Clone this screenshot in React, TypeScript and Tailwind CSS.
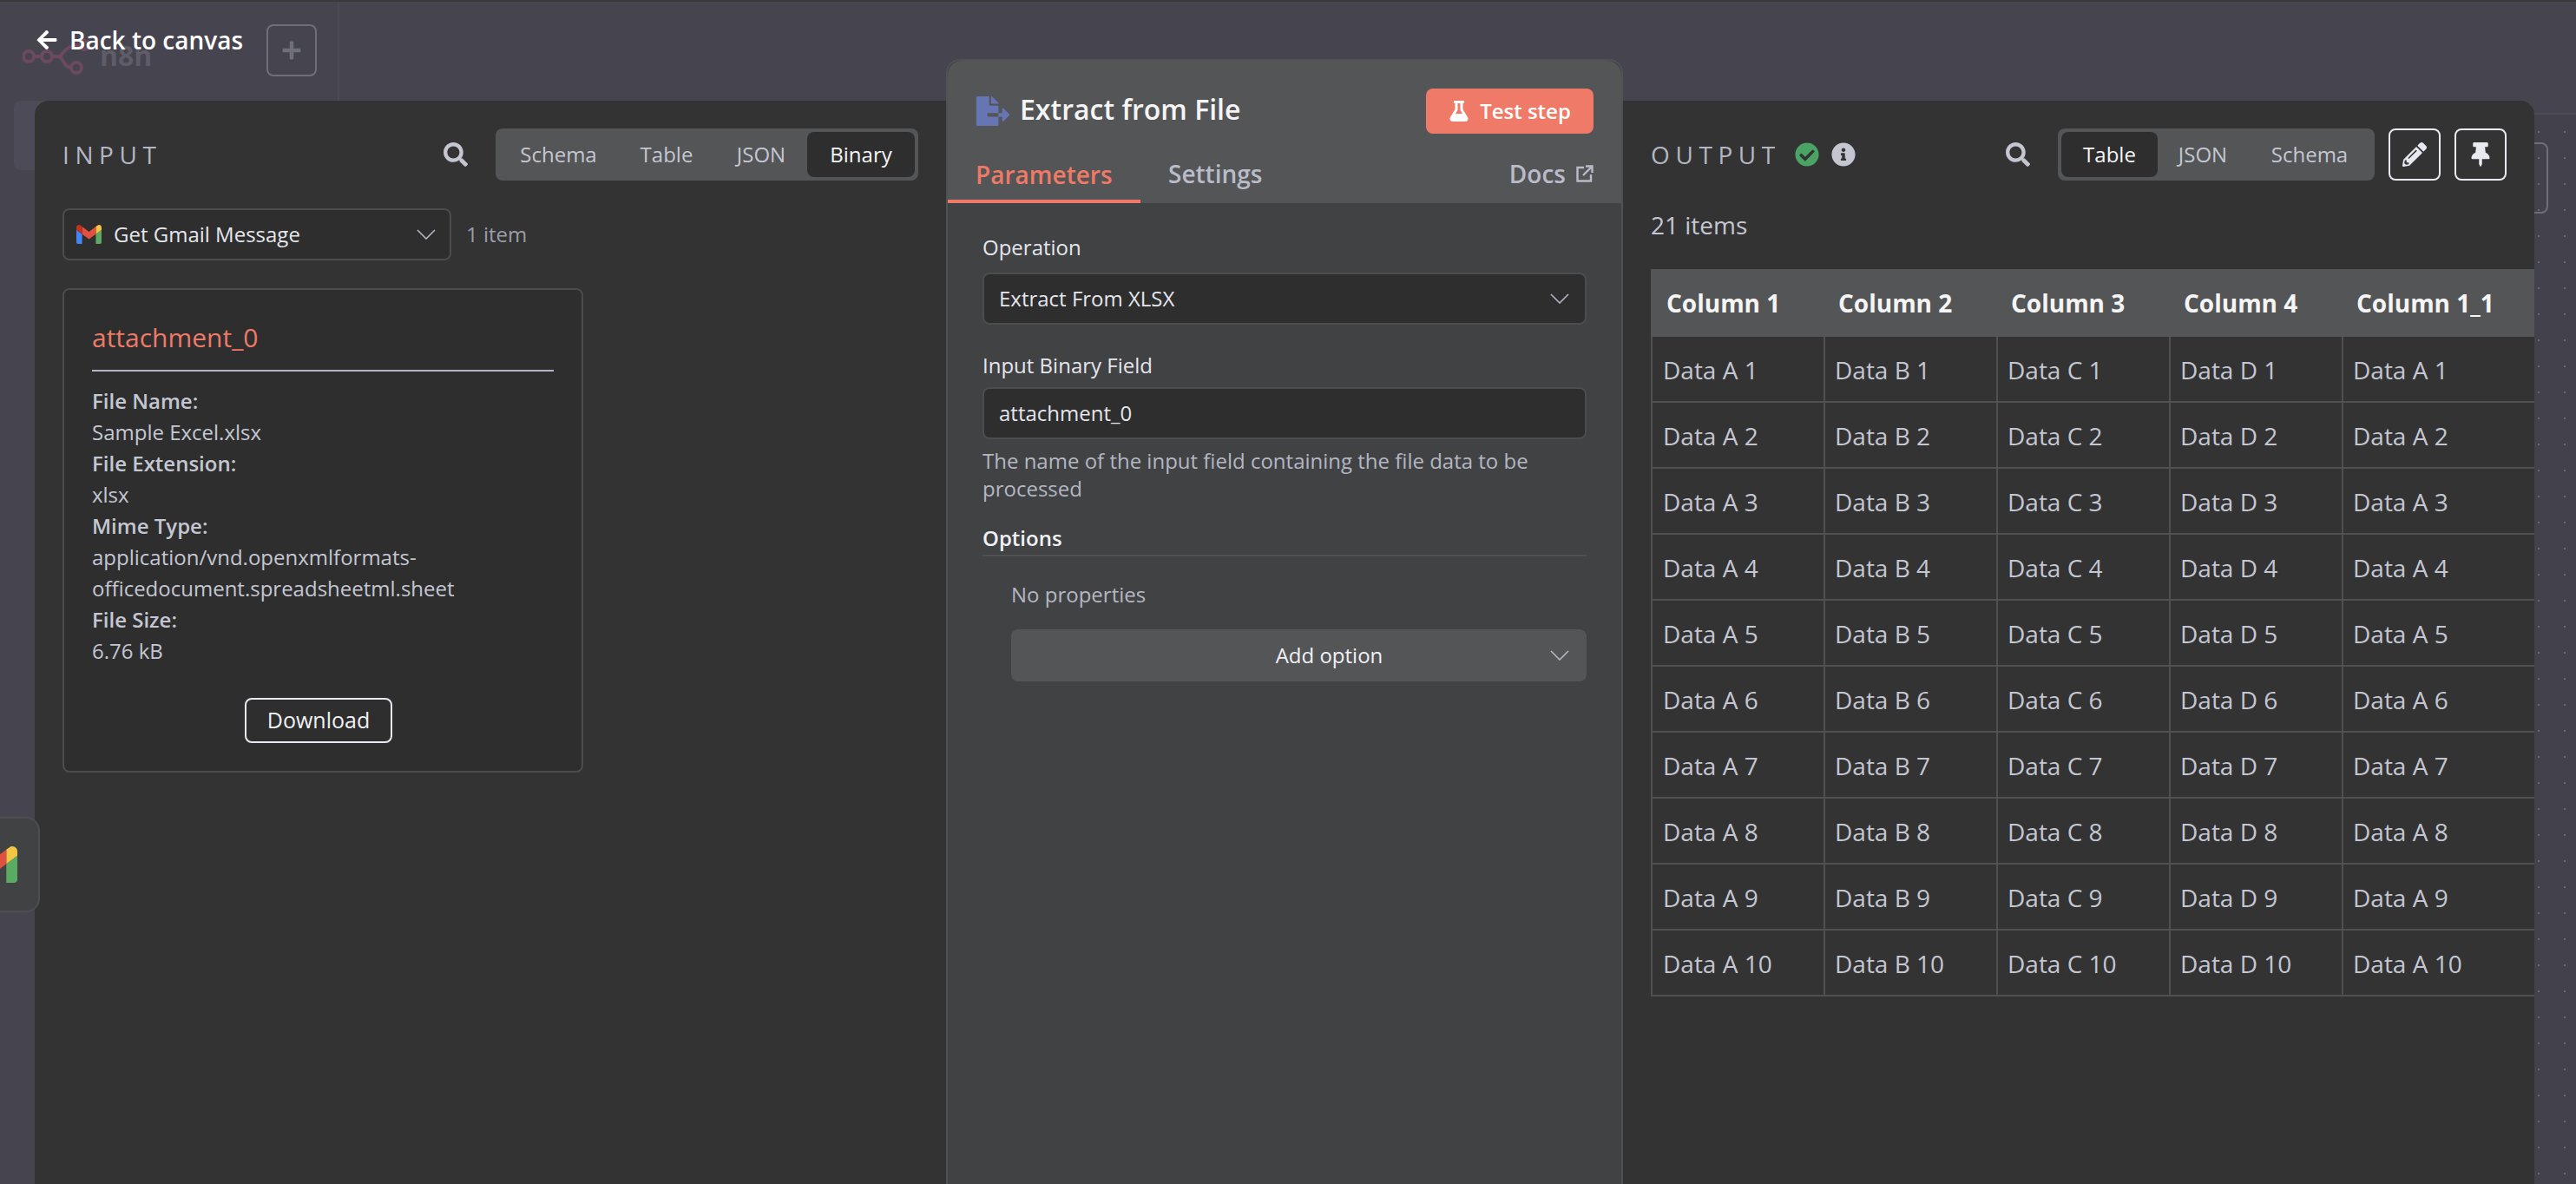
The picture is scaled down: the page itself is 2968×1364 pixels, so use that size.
import React from "react";
import { FaArrowLeft, FaPlus, FaSearch, FaFileExport, FaFlask, FaCheckCircle, FaInfoCircle, FaPencilAlt, FaThumbtack } from "react-icons/fa";

function Chevron() {
  return (
    <svg width="22" height="12" viewBox="0 0 22 12" fill="none" className="shrink-0">
      <path d="M1 1l10 10L21 1" stroke="#b4b7c2" strokeWidth="1.6" />
    </svg>
  );
}

function Gmail({ className }: { className: string }) {
  return (
    <svg viewBox="52 42 88 66" className={className}>
      <path fill="#4285f4" d="M58 108h14V74L52 59v43c0 3.32 2.69 6 6 6" />
      <path fill="#5aaa63" d="M120 108h14c3.32 0 6-2.69 6-6V59l-20 15" />
      <path fill="#f3c544" d="M120 48v26l20-15v-8c0-7.42-8.47-11.65-14.4-7.2" />
      <path fill="#e0513f" d="M72 74V48l24 18 24-18v26L96 92" />
      <path fill="#c5321f" d="M52 51v8l20 15V48l-5.6-4.2c-5.94-4.45-14.4-.22-14.4 7.2" />
    </svg>
  );
}

function Tabs({ items, active }: { items: { label: string; w: string }[]; active: string }) {
  return (
    <div className="flex h-[60px] items-center rounded-lg bg-[#545556] px-[4px]">
      {items.map((t) =>
        t.label === active ? (
          <div key={t.label} className={`flex h-[52px] items-center justify-center rounded-lg bg-[#2e2e2e] text-[#f5f5f5] ${t.w}`}>
            {t.label}
          </div>
        ) : (
          <div key={t.label} className={`flex h-[52px] items-center justify-center text-[#c4c7d2] ${t.w}`}>
            {t.label}
          </div>
        )
      )}
    </div>
  );
}

const columns = ["Column 1", "Column 2", "Column 3", "Column 4", "Column 1_1"];
const rows = Array.from({ length: 10 }, (_, i) => i + 1);

function CardRow({ label, value }: { label: string; value: string[] }) {
  return (
    <>
      <div className="h-[36px] font-semibold leading-[36px]">{label}</div>
      {value.map((v) => (
        <div key={v} className="h-[36px] leading-[36px]">{v}</div>
      ))}
    </>
  );
}

export default function App() {
  return (
    <div className="relative h-[1364px] w-[2968px] overflow-hidden border-t-2 border-[#3a3a3a] bg-[#45444f] [font-family:'Open_Sans',sans-serif]">
      {/* canvas behind the modal */}
      <div className="flex h-[130px]">
        <div className="w-[391px] border-r-2 border-[#4a4955] pl-[26px] pt-[41px]">
          <div className="flex items-center">
            <svg width="76" height="44" viewBox="0 0 76 44" fill="none" stroke="#6b4a5d" strokeWidth="4">
              <circle cx="7" cy="22" r="6" />
              <circle cx="28" cy="22" r="6" />
              <circle cx="62" cy="35" r="6" />
              <circle cx="71" cy="9" r="5" />
              <path d="M13 22h9M34 22h7c6 0 6-13 25-13M41 22c6 0 6 13 15 13" />
            </svg>
            <span className="mb-[2px] ml-[13px] text-[32px] font-bold leading-[34px] text-[#5d5c67]">n8n</span>
          </div>
          <div className="-ml-[10px] mt-[29px] h-[80px] w-[348px] rounded-lg bg-[#4c4b57]" />
        </div>
        <div className="flex-1 border-b-2 border-[#4c4b57]" />
      </div>
      <div className="absolute bottom-0 left-[2920px] right-0 top-[130px] bg-[#42414c] bg-[radial-gradient(circle_at_5px_20px,#6b6a76_1px,transparent_1.5px)] bg-[length:30px_30px]" />
      <div className="absolute right-[32px] top-[162px] h-[82px] w-[40px] rounded-lg border-2 border-[#6f6f7c]" />

      {/* back link and add button on the modal backdrop */}
      <div className="absolute left-[41px] top-[24px] flex items-center gap-[13px] text-[28px] font-semibold leading-[40px] text-white">
        <FaArrowLeft className="h-[26px] w-[26px]" />
        <span>Back to canvas</span>
      </div>
      <div className="absolute left-[307px] top-[26px] flex h-[60px] w-[58px] items-center justify-center rounded-lg border-2 border-[#6f6f7c]">
        <FaPlus className="h-[24px] w-[24px] text-[#6f6f7c]" />
      </div>

      {/* modal */}
      <div className="absolute bottom-0 left-[40px] right-[48px] top-[114px] flex rounded-t-2xl bg-[#333333]">
        {/* input */}
        <div className="w-[1050px] shrink-0 pl-[32px] pr-[32px] pt-[32px]">
          <div className="flex h-[60px] items-center">
            <div className="text-[28px] uppercase leading-none tracking-[6.6px] text-[#b4b7c2]">Input</div>
            <FaSearch className="ml-auto h-[28px] w-[28px] text-[#c4c7d2]" />
            <div className="ml-[32px] text-[24px] font-medium">
              <Tabs
                active="Binary"
                items={[
                  { label: "Schema", w: "w-[137px]" },
                  { label: "Table", w: "w-[112px]" },
                  { label: "JSON", w: "w-[106px]" },
                  { label: "Binary", w: "w-[124px]" },
                ]}
              />
            </div>
          </div>
          <div className="mt-[32px] flex items-center">
            <div className="flex h-[60px] w-[448px] items-center rounded-lg border-2 border-[#4c4c4c] bg-[#2e2e2e] pl-[14px] pr-[16px]">
              <Gmail className="h-[22px] w-[29px]" />
              <span className="ml-[14px] text-[24px] text-[#e4e6ec]">Get Gmail Message</span>
              <span className="ml-auto"><Chevron /></span>
            </div>
            <span className="ml-[17px] text-[24px] text-[#9a9da8]">1 item</span>
          </div>
          <div className="mt-[32px] h-[558px] w-[600px] rounded-lg border-2 border-[#4c4c4c] bg-[#2e2e2e] px-[32px] pt-[32px] text-[24px] text-[#c4c7d2]">
            <div className="h-[46px] text-[30px] font-medium leading-[46px] text-[#ef7a67]">attachment_0</div>
            <div className="mb-[16px] mt-[14px] border-b-2 border-[#b4b7c2]" />
            <CardRow label="File Name:" value={["Sample Excel.xlsx"]} />
            <CardRow label="File Extension:" value={["xlsx"]} />
            <CardRow label="Mime Type:" value={["application/vnd.openxmlformats-", "officedocument.spreadsheetml.sheet"]} />
            <CardRow label="File Size:" value={["6.76 kB"]} />
            <div className="mt-[36px] flex justify-center pr-[10px]">
              <div className="flex h-[52px] w-[170px] items-center justify-center rounded-lg border-2 border-[#e8eaf0] text-[25px] font-medium text-[#f0f1f5]">
                Download
              </div>
            </div>
          </div>
        </div>

        {/* parameters */}
        <div className="z-10 -mt-[48px] w-[780px] shrink-0 rounded-t-2xl border-x-2 border-t-2 border-[#505152] bg-[#414244]">
          <div className="rounded-t-2xl bg-[#545556]">
            <div className="flex h-[84px] items-center pl-[32px] pr-[32px] pt-[32px]">
              <FaFileExport className="h-[34px] w-[40px] text-[#6675b3]" />
              <div className="mb-[4px] ml-[11px] text-[32px] font-semibold leading-none text-[#f5f5f5]">Extract from File</div>
              <div className="ml-auto flex h-[52px] w-[193px] items-center justify-center gap-[12px] rounded-lg bg-[#ef7a67] text-[24px] font-semibold text-white">
                <FaFlask className="h-[24px] w-[24px]" />
                <span>Test step</span>
              </div>
            </div>
            <div className="flex h-[80px] items-end pr-[32px] text-[28px] font-semibold text-[#b9bcc8]">
              <div className="flex h-[80px] w-[222px] items-center border-b-4 border-[#ef7a67] pl-[32px] pt-[18px] text-[#ef7a67]">Parameters</div>
              <div className="flex h-[80px] items-center pl-[32px] pt-[12px]">Settings</div>
              <div className="ml-auto flex h-[80px] items-center gap-[12px] pt-[12px]">
                <span>Docs</span>
                <svg width="20" height="20" viewBox="0 0 20 20" fill="none" stroke="#b9bcc8" strokeWidth="2.4">
                  <path d="M9 3H1.5v15.5H17V11M8 12L18 2M11 1.5h7.5V9" />
                </svg>
              </div>
            </div>
          </div>
          <div className="px-[40px] pt-[32px] text-[24px]">
            <div className="h-[38px] font-medium leading-[38px] text-[#e4e6ec]">Operation</div>
            <div className="mt-[10px] flex h-[60px] items-center rounded-lg border-2 border-[#4c4d4e] bg-[#2e2e2e] pl-[17px] pr-[18px]">
              <span className="text-[#e4e6ec]">Extract From XLSX</span>
              <span className="ml-auto"><Chevron /></span>
            </div>
            <div className="mt-[28px] h-[38px] font-medium leading-[38px] text-[#e4e6ec]">Input Binary Field</div>
            <div className="mt-[6px] flex h-[60px] items-center rounded-lg border-2 border-[#4c4d4e] bg-[#2e2e2e] pl-[17px] text-[#e4e6ec]">
              attachment_0
            </div>
            <div className="mt-[9px] leading-[32px] text-[#b4b7c2]">
              The name of the input field containing the file data to be processed
            </div>
            <div className="mt-[22px] h-[40px] border-b-2 border-[#505152] font-semibold leading-[38px] text-[#f0f1f5]">Options</div>
            <div className="ml-[33px]">
              <div className="mt-[25px] h-[38px] leading-[38px] text-[#b4b7c2]">No properties</div>
              <div className="relative mt-[21px] flex h-[60px] items-center justify-center rounded-lg bg-[#545556] text-[#f0f1f5]">
                <span className="pl-[70px] font-medium">Add option</span>
                <span className="absolute right-[20px] flex"><Chevron /></span>
              </div>
            </div>
          </div>
        </div>

        {/* output */}
        <div className="min-w-0 flex-1 overflow-hidden pl-[32px] pt-[32px]">
          <div className="flex h-[60px] items-center pr-[32px]">
            <div className="text-[28px] uppercase leading-none tracking-[6.6px] text-[#b4b7c2]">Output</div>
            <FaCheckCircle className="ml-[16px] h-[28px] w-[28px] text-[#4aa465]" />
            <FaInfoCircle className="ml-[14px] h-[28px] w-[28px] text-[#c4c7d2]" />
            <FaSearch className="ml-auto h-[28px] w-[28px] text-[#c4c7d2]" />
            <div className="ml-[32px] text-[24px] font-medium">
              <Tabs
                active="Table"
                items={[
                  { label: "Table", w: "w-[111px]" },
                  { label: "JSON", w: "w-[104px]" },
                  { label: "Schema", w: "w-[142px]" },
                ]}
              />
            </div>
            <div className="ml-[16px] flex h-[60px] w-[60px] items-center justify-center rounded-lg border-2 border-[#e8eaf0]">
              <FaPencilAlt className="h-[28px] w-[28px] text-[#e8eaf0]" />
            </div>
            <div className="ml-[16px] flex h-[60px] w-[60px] items-center justify-center rounded-lg border-2 border-[#e8eaf0]">
              <FaThumbtack className="h-[28px] w-[28px] text-[#e8eaf0]" />
            </div>
          </div>
          <div className="mt-[32px] h-[38px] text-[28px] leading-[38px] text-[#c4c7d2]">21 items</div>
          <table className="mt-[32px] w-[1042px] table-fixed border-separate border-spacing-0 text-[28px]">
            <thead>
              <tr>
                {columns.map((c, i) => (
                  <th key={c} className={`h-[78px] bg-[#545556] text-left font-bold text-[#f5f5f5] ${i === 0 ? "w-[201px] pl-[18px]" : i === 4 ? "w-[244px] pl-[15px]" : "w-[199px] pl-[15px]"}`}>
                    {c}
                  </th>
                ))}
              </tr>
            </thead>
            <tbody>
              {rows.map((r) => (
                <tr key={r}>
                  {["A", "B", "C", "D", "A"].map((l, i) => (
                    <td key={i} className={`h-[76px] border-b-2 border-r-2 border-[#505050] pt-[2px] text-[#c4c7d2] ${i === 0 ? "border-l-2 pl-[12px]" : "pl-[11px]"}`}>
                      Data {l} {r}
                    </td>
                  ))}
                </tr>
              ))}
            </tbody>
          </table>
        </div>
      </div>

      {/* collapsed node tab */}
      <div className="absolute left-0 top-[939px] z-20 h-[110px] w-[46px] overflow-hidden rounded-r-2xl border-2 border-l-0 border-[#4d4e4f] bg-[#414244]">
        <Gmail className="absolute -left-[36px] top-[32px] h-[42px] w-[56px] max-w-none" />
      </div>
    </div>
  );
}
